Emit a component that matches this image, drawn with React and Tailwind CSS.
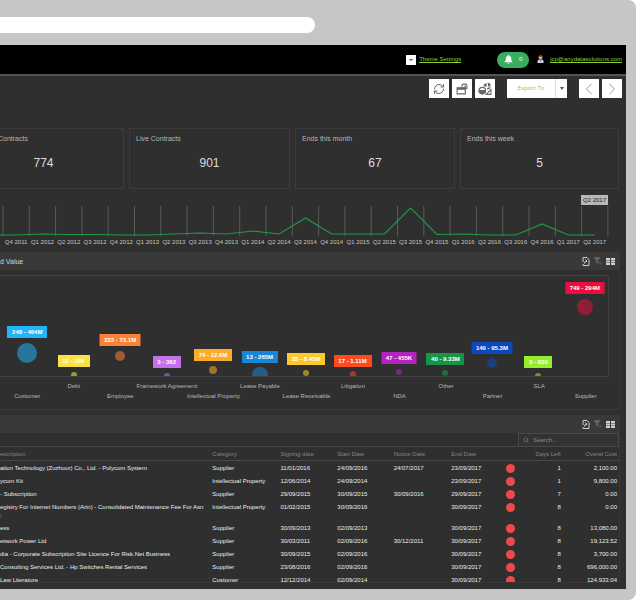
import React from 'react';
import clsx from 'clsx';
import { ChevronLeft, ChevronRight, RefreshCw, Search } from 'lucide-react';

const cards = [
  { label: 'Contracts', value: 774 },
  { label: 'Live Contracts', value: 901 },
  { label: 'Ends this month', value: 67 },
  { label: 'Ends this week', value: 5 },
];

const quarters = [
  ['Q4 2011', 0], ['Q1 2012', 1], ['Q2 2012', 0.5], ['Q3 2012', 0.5], ['Q4 2012', 0], ['Q1 2013', 0],
  ['Q2 2013', 1], ['Q3 2013', 2], ['Q4 2013', 1], ['Q1 2014', 4], ['Q2 2014', 1], ['Q3 2014', 17],
  ['Q4 2014', 1], ['Q1 2015', 1], ['Q2 2015', 1], ['Q3 2015', 27], ['Q4 2015', 0.5], ['Q1 2016', 1],
  ['Q2 2016', 0], ['Q3 2016', 0], ['Q4 2016', 11], ['Q1 2017', 0], ['Q2 2017', 0],
];

// y and r are chart units, tag is the top of the value label
const bubbles = [
  { name: 'Customer', text: '248 - 464M', y: 77, r: 10, tag: 50, tagW: 40, color: '#21b4f8', dot: '#28779a' },
  { name: 'Debt', text: '12 - 19K', y: 99, r: 3, tag: 79, tagW: 32, color: '#fde047', dot: '#a29438' },
  { name: 'Employee', text: '223 - 73.1M', y: 80, r: 5, tag: 58, tagW: 41, color: '#fb8136', dot: '#9c5c34' },
  { name: 'Framework Agreement', text: '3 - 362', y: 100, r: 3, tag: 80, tagW: 28, color: '#c770ee', dot: '#80529a' },
  { name: 'Intellectual Property', text: '74 - 12.6M', y: 94, r: 4, tag: 73, tagW: 38, color: '#fdab2b', dot: '#a1732d' },
  { name: 'Lease Payable', text: '13 - 265M', y: 99, r: 8, tag: 75, tagW: 36, color: '#1987d5', dot: '#245d87' },
  { name: 'Lease Receivable', text: '35 - 8.45M', y: 97, r: 3, tag: 77, tagW: 38, color: '#fdc82f', dot: '#a3842f' },
  { name: 'Litigation', text: '17 - 1.11M', y: 98, r: 3, tag: 79, tagW: 38, color: '#fd4a1f', dot: '#a03d28' },
  { name: 'NDA', text: '47 - 455K', y: 96, r: 3, tag: 76, tagW: 35, color: '#b224bd', dot: '#772a7d' },
  { name: 'Other', text: '40 - 9.33M', y: 97, r: 3, tag: 77, tagW: 38, color: '#169548', dot: '#206a3e' },
  { name: 'Partner', text: '140 - 95.3M', y: 87, r: 5, tag: 66, tagW: 41, color: '#0b4abb', dot: '#1d407c' },
  { name: 'SLA', text: '3 - 839', y: 100, r: 3, tag: 80, tagW: 28, color: '#96ef2b', dot: '#6a9a2e' },
  { name: 'Supplier', text: '749 - 294M', y: 31, r: 8, tag: 6, tagW: 39, color: '#ed0c3e', dot: '#901e35' },
];

const rows = [
  ['ation Technology (Zuzhour) Co., Ltd. - Polycom System', 'Supplier', '11/01/2016', '24/09/2016', '24/07/2017', '23/09/2017', '1', '2,100.00'],
  ['ycom Kit', 'Intellectual Property', '12/06/2014', '24/09/2014', '', '23/09/2017', '1', '9,800.00'],
  ['- Subscription', 'Supplier', '29/09/2015', '30/09/2015', '30/09/2016', '29/09/2017', '7', '0.00'],
  ['egistry For Internet Numbers (Arin) - Consolidated Maintenance Fee For Asn\n:', 'Intellectual Property', '01/02/2015', '30/09/2016', '', '30/09/2017', '8', '0.00'],
  ['ess', 'Supplier', '30/09/2013', '02/09/2013', '', '30/09/2017', '8', '13,080.00'],
  ['etwork Power Ltd', 'Supplier', '30/03/2011', '02/09/2016', '30/12/2011', '30/09/2017', '8', '19,123.52'],
  ['dia - Corporate Subscription Site Licence For Risk.Net Business', 'Supplier', '30/09/2015', '02/09/2016', '', '30/09/2017', '8', '3,700.00'],
  ['Consulting Services Ltd. - Hp Switches Rental Services', 'Supplier', '23/08/2016', '02/09/2016', '', '30/09/2017', '8', '696,000.00'],
  ['Law Literature', 'Customer', '12/12/2014', '02/09/2014', '', '30/09/2017', '8', '124,933.04'],
];

const ToolButton = ({ label, children }) => (
  <button aria-label={label} className="w-5 h-[19px] bg-white flex items-center justify-center text-[#666]">
    {children}
  </button>
);

const LayoutIcon = () => (
  <svg viewBox="0 0 22 22" className="w-3 h-3" fill="none" stroke="currentColor" strokeWidth="2">
    <path d="M2 9h15v11H2z" />
    <path d="M2 10.500h15" strokeWidth="4" />
    <path d="M11 8V5a3 3 0 0 1 3-3h3a3 3 0 0 1 3 3v5h-3V6h-2" />
  </svg>
);

const ChartsIcon = () => (
  <svg viewBox="0 0 26 26" className="w-3.5 h-3.5" fill="none" stroke="currentColor" strokeWidth="2">
    <circle cx="8" cy="16" r="6" />
    <path d="M2 16h12a6 6 0 0 1-12 0z" fill="currentColor" />
    <path d="M10 8a7 7 0 0 1 6-6v7z" fill="currentColor" stroke="none" />
    <path d="M18 1a7 7 0 0 1 6 6l-5 2z" fill="currentColor" stroke="none" />
    <path d="M24 9a7 7 0 0 1-7 5v-3z" fill="currentColor" stroke="none" />
    <path d="M24 14v9h-9z" />
  </svg>
);

const BellIcon = () => (
  <svg viewBox="0 0 18 18" className="w-[9px] h-[9px]" fill="currentColor">
    <path d="M9 0a1.500 1.500 0 0 1 1.500 1.600C13.500 2.400 14.500 5 14.500 8c0 3 1 4.500 3 6.500H.500c2-2 3-3.500 3-6.500 0-3 1-5.600 4-6.400A1.500 1.500 0 0 1 9 0zM7 15.500h4a2 2 0 0 1-4 0z" />
  </svg>
);

const UserIcon = () => (
  <svg viewBox="0 0 14 16" className="w-[7px] h-2 mr-[6px] mb-0.5">
    <path d="M1 16v-3c0-3 2-4 6-4s6 1 6 4v3z" fill="#c3d3ee" />
    <path d="M5.500 9h3L7 14z" fill="#c0392b" />
    <circle cx="7" cy="5" r="4" fill="#e0a673" />
    <path d="M3 4c0-5 8-5 8 0-3 0-5-1-8 0z" fill="#7a4a22" />
  </svg>
);

const PanelHeader = ({ title }) => (
  <div className="h-[18px] bg-[#393939] flex items-center justify-between pr-1">
    <h2 className="text-[7px] leading-none text-[#d4d4d4]">{title}</h2>
    <div className="flex items-center gap-1 text-[#d0d0d0]">
      <button aria-label="Export">
        <svg viewBox="0 0 16 18" className="w-2 h-[9px]" fill="none" stroke="currentColor" strokeWidth="2">
          <path d="M2 10V1h8l4 4v12H2v-3" />
          <path d="M5 13c0-4 2-5 5-5M7 5l3 3-3 3" />
        </svg>
      </button>
      <button aria-label="Clear filter" className="text-[#666]">
        <svg viewBox="0 0 16 16" className="w-2 h-2" fill="none" stroke="currentColor" strokeWidth="1.500">
          <path d="M0 1h12L7.500 7v6L5 11V7z" fill="currentColor" />
          <path d="M10 10l5 5M15 10l-5 5" />
        </svg>
      </button>
      <button aria-label="Options">
        <svg viewBox="0 0 18 14" className="w-[9px] h-[7px]" fill="currentColor">
          <path d="M0 0h8v4H0zM10 0h8v4h-8zM0 5h8v4H0zM10 5h8v4h-8zM0 10h8v4H0zM10 10h8v4h-8z" />
        </svg>
      </button>
    </div>
  </div>
);

const Timeline = () => {
  const points = quarters.map(([, v], i) => `${(i + 0.5) * 26.3},${29 - v}`).join(' ');
  return (
    <section className="pt-1.5 pl-[3px] pr-[18px]">
      <div className="flex justify-end">
        <span className="h-2.5 px-0.5 bg-[#b8b8b8] text-[6px] leading-[10px] text-[#222]">Q2 2017</span>
      </div>
      <svg viewBox="0 0 605 31" preserveAspectRatio="none" className="w-full h-[31px] overflow-visible" fill="none">
        {[...quarters, null].map((_, i) => (
          <path key={i} d={`M${i * 26.3} 1v30`} stroke="#5a5a5a" />
        ))}
        <polyline points={`-4,29 ${points}`} transform="translate(0 1)" stroke="#1f9a45" strokeWidth="1.2" />
      </svg>
      <div className="flex pt-0.5 text-[6px] leading-[8px] text-[#c4c4c4]">
        {quarters.map(([q]) => (
          <span key={q} className="flex-1 basis-0 min-w-0 flex justify-center whitespace-nowrap">{q}</span>
        ))}
      </div>
    </section>
  );
};

const BubbleChart = () => (
  <div className="pt-[5px] pr-[10px]">
    <div className="border border-l-0 border-[#404040] h-[102px]">
      <div className="h-full flex pl-1 overflow-hidden">
        {bubbles.map((b) => (
          <div key={b.name} className="relative flex-1 basis-0 min-w-0">
            <span
              className="absolute left-1/2 -translate-x-1/2 h-3 text-[6px] leading-[12px] font-bold text-white text-center whitespace-nowrap"
              style={{ top: b.tag, width: b.tagW, background: b.color }}
            >
              {b.text}
            </span>
            <span
              className="absolute left-1/2 -translate-x-1/2 -translate-y-1/2 rounded-full"
              style={{ top: b.y, width: b.r * 2, height: b.r * 2, background: b.dot }}
            />
          </div>
        ))}
      </div>
    </div>
    <div className="flex pl-1 pt-1 text-[6px] leading-[10px] text-[#b8b8b8]">
      {bubbles.map((b, i) => (
        <span key={b.name} className={clsx('flex-1 basis-0 min-w-0 flex justify-center whitespace-nowrap', i % 2 === 0 && 'pt-2.5')}>
          {b.name}
        </span>
      ))}
    </div>
  </div>
);

const ContractsTable = () => (
  <table className="w-full table-fixed text-[6px] leading-[8px] text-[#ececec]">
    <colgroup>
      <col className="w-[34.3%]" />
      <col className="w-[11%]" />
      <col className="w-[9.2%]" />
      <col className="w-[9.1%]" />
      <col className="w-[9.3%]" />
      <col className="w-[7.5%]" />
      <col className="w-[4%]" />
      <col className="w-[6.2%]" />
      <col className="w-[9.4%]" />
    </colgroup>
    <thead>
      <tr className="h-[14px] border-y border-[#484848] text-left text-[#858585]">
        <th className="font-normal">escription</th>
        <th className="font-normal">Category</th>
        <th className="font-normal">Signing date</th>
        <th className="font-normal">Start Date</th>
        <th className="font-normal">Notice Date</th>
        <th className="font-normal">End Date</th>
        <th aria-label="Status" />
        <th className="font-normal text-right whitespace-nowrap">Days Left</th>
        <th className="font-normal text-right pr-0.5">Overal Cost</th>
      </tr>
    </thead>
    <tbody>
      {rows.map(([description, category, signing, start, notice, end, days, cost]) => (
        <tr key={description} className="align-top">
          <td className="pt-[3px] pb-0.5 pr-1 whitespace-pre-line">{description}</td>
          <td className="pt-[3px] whitespace-nowrap">{category}</td>
          <td className="pt-[3px]">{signing}</td>
          <td className="pt-[3px]">{start}</td>
          <td className="pt-[3px]">{notice}</td>
          <td className="pt-[3px]">{end}</td>
          <td className="pt-[3px]"><span className="block mx-auto w-[9px] h-[9px] rounded-full bg-[#ef4a4a]" /></td>
          <td className="pt-[3px] text-right">{days}</td>
          <td className="pt-[3px] pr-0.5 text-right">{cost}</td>
        </tr>
      ))}
    </tbody>
  </table>
);

export default function App() {
  return (
    <div className="bg-white h-screen overflow-hidden font-['Liberation_Sans',Arial,sans-serif]">
      <div className="h-full flex flex-col bg-[#c6c6c6] rounded-r-lg pb-[11px] pr-2.5">
        <div className="pt-[17px] pb-3">
          <input aria-label="Address" className="block w-[50.3%] h-4 bg-white rounded-r-full" />
        </div>

        <div className="flex-1 min-h-0 flex flex-col bg-[#2f2f2f]">
          <header className="h-[31px] shrink-0 bg-black border-b-2 border-[#555] flex items-center justify-end pr-1 text-[6px] text-[#8fd02f]">
            <button aria-label="Themes" className="w-2.5 h-2.5 mr-[3px] bg-white flex items-center justify-center">
              <span className="border-x-2 border-t-2 border-x-transparent border-t-[#555]" />
            </button>
            <a href="#theme" className="underline">Theme Settings</a>
            <button aria-label="Notifications" className="ml-9 mr-2 w-8 h-4 rounded-full bg-[#3aae5f] text-white flex items-center justify-center gap-1.5">
              <BellIcon />
              <span>0</span>
            </button>
            <UserIcon />
            <a href="#account" className="underline">jcp@anydatasolutions.com</a>
          </header>

          <div className="flex justify-end gap-[3px] pt-[3px] pr-1">
            <ToolButton label="Refresh"><RefreshCw size={12} strokeWidth={2} /></ToolButton>
            <ToolButton label="Layout"><LayoutIcon /></ToolButton>
            <ToolButton label="Charts"><ChartsIcon /></ToolButton>
            <div className="flex h-[19px] mx-[9px] bg-white">
              <button className="w-12 text-[6px] text-[#84c92c] font-['Open_Sans',sans-serif]">Export To</button>
              <button aria-label="Export options" className="w-3 border-l border-[#ddd] flex items-center justify-center">
                <span className="border-x-2 border-t-[3px] border-x-transparent border-t-[#555]" />
              </button>
            </div>
            <ToolButton label="Previous"><ChevronLeft size={20} strokeWidth={1.2} className="text-[#999]" /></ToolButton>
            <ToolButton label="Next"><ChevronRight size={20} strokeWidth={1.2} className="text-[#999]" /></ToolButton>
          </div>

          <section className="grid grid-cols-[124fr_161fr_160fr_159fr] gap-[5px] pt-[30px] pr-[7px]">
            {cards.map((card, i) => (
              <div key={card.label} className={clsx('h-[61px] border border-[#3b3b3b] pt-1.5', i === 0 ? 'border-l-0 pr-9' : 'px-1.5')}>
                <h3 className={clsx('text-[7px] leading-[8px] text-[#b5b5b5]', i === 0 && '-ml-0.5')}>{card.label}</h3>
                <p className="pt-3 text-xs text-center text-[#dcdcdc]">{card.value}</p>
              </div>
            ))}
          </section>

          <Timeline />

          <section className="mt-1.5 mr-1.5 border-r border-b border-[#383838] pb-2">
            <PanelHeader title="d Value" />
            <BubbleChart />
          </section>

          <section className="mt-[5px] mr-1.5 mb-1.5 flex-1 min-h-0 overflow-hidden border-r border-b border-[#383838]">
            <PanelHeader />
            <div className="flex justify-end">
              <label className="w-[101px] h-[13px] border border-b-0 border-[#484848] bg-[#333] flex items-center gap-1 px-1 text-[#8a8a8a]">
                <Search size={6} />
                <input aria-label="Search" placeholder="Search..." className="min-w-0 flex-1 text-[6px] leading-none placeholder:text-[#8a8a8a]" />
              </label>
            </div>
            <ContractsTable />
          </section>
        </div>
      </div>
    </div>
  );
}
